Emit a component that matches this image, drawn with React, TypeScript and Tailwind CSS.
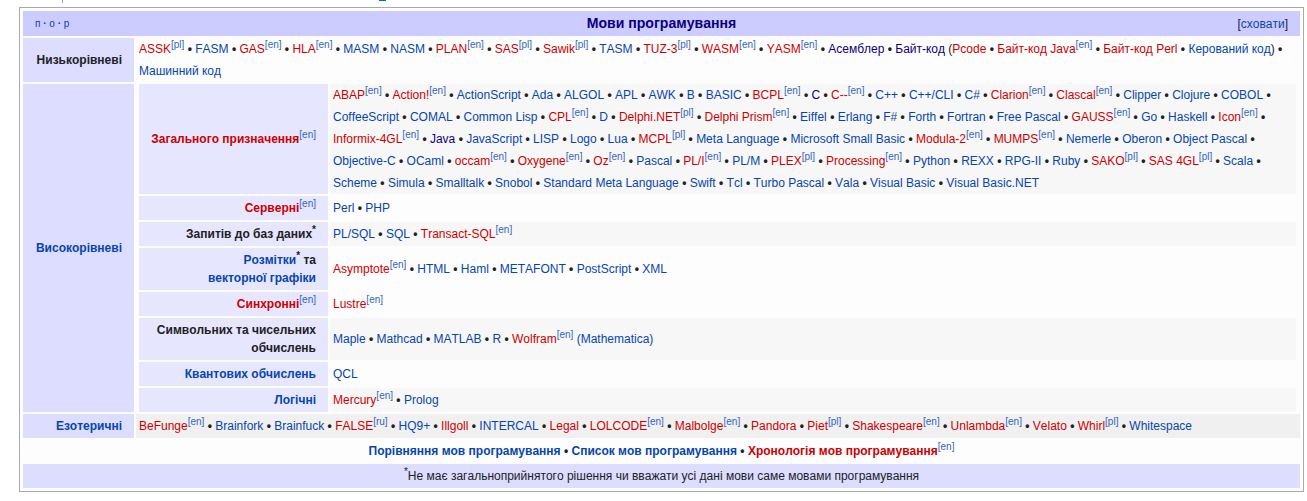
const font = "font-['Liberation_Sans',Arial,sans-serif] [font-kerning:none]";

function Sup({ t }: { t: string }) {
  return <sup className="text-[10px] font-normal leading-none align-super top-0 text-[#3366bb]">[{t}]</sup>;
}

function Star() {
  return <sup className="text-[10px] leading-none align-super top-0">*</sup>;
}

// ~ = red link, @ = visited link, ^ = interwiki note
function Item({ s }: { s: string }) {
  let text = s;
  let open = "";
  let close = "";
  if (text.startsWith("(")) {
    open = "(";
    text = text.slice(1);
  }
  if (text.endsWith(")")) {
    close = ")";
    text = text.slice(0, -1);
  }
  const [name, note] = text.split("^");
  let color = "text-[#0645ad]";
  let label = name;
  if (name.startsWith("~")) {
    color = "text-[#cc0000]";
    label = name.slice(1);
  } else if (name.startsWith("@")) {
    color = "text-[#0b0080]";
    label = name.slice(1);
  }
  return (
    <span className="whitespace-nowrap">
      {open}
      <a className={color}>{label}</a>
      {note && <Sup t={note} />}
      {close}
    </span>
  );
}

function List({ items }: { items: string }) {
  const parts = items.split(" | ");
  return (
    <>
      {parts.map((p, i) => {
        const next = parts[i + 1];
        return (
          <span key={i}>
            <Item s={p} />
            {next && !next.startsWith("(") && <b className="font-bold whitespace-nowrap">&nbsp;•</b>}
            {next && " "}
          </span>
        );
      })}
    </>
  );
}

const low =
  "~ASSK^pl | FASM | ~GAS^en | ~HLA^en | MASM | NASM | ~PLAN^en | ~SAS^pl | ~Sawik^pl | TASM | ~TUZ-3^pl | ~WASM^en | ~YASM^en | @Асемблер | @Байт-код | (~Pcode | ~Байт-код Java^en | ~Байт-код Perl | Керований код) | Машинний код";
const general =
  "~ABAP^en | ~Action!^en | ActionScript | Ada | ALGOL | APL | AWK | B | BASIC | ~BCPL^en | @C | ~C--^en | C++ | C++/CLI | C# | ~Clarion^en | ~Clascal^en | Clipper | Clojure | COBOL | CoffeeScript | COMAL | Common Lisp | ~CPL^en | D | ~Delphi.NET^pl | ~Delphi Prism^en | Eiffel | Erlang | F# | Forth | Fortran | Free Pascal | ~GAUSS^en | Go | Haskell | ~Icon^en | ~Informix-4GL^en | @Java | JavaScript | LISP | Logo | Lua | ~MCPL^pl | Meta Language | Microsoft Small Basic | ~Modula-2^en | ~MUMPS^en | Nemerle | Oberon | Object Pascal | Objective-C | OCaml | ~occam^en | ~Oxygene^en | ~Oz^en | Pascal | ~PL/I^en | PL/M | ~PLEX^pl | ~Processing^en | Python | REXX | RPG-II | Ruby | ~SAKO^pl | ~SAS 4GL^pl | Scala | Scheme | Simula | Smalltalk | Snobol | Standard Meta Language | Swift | Tcl | Turbo Pascal | Vala | Visual Basic | Visual Basic.NET";
const esoteric =
  "~BeFunge^en | Brainfork | Brainfuck | ~FALSE^ru | HQ9+ | ~Illgoll | INTERCAL | ~Legal | ~LOLCODE^en | ~Malbolge^en | ~Pandora | ~Piet^pl | ~Shakespeare^en | ~Unlambda^en | ~Velato | ~Whirl^pl | Whitespace";

function SubRow({
  title,
  items,
  even,
  height,
  children,
}: {
  title: React.ReactNode;
  items?: string;
  even?: boolean;
  height: string;
  children?: React.ReactNode;
}) {
  return (
    <div className={`flex gap-[2px] ${height}`}>
      <div className="w-[189px] shrink-0 bg-[#e6e6ff] pl-2 pr-3 font-bold text-right leading-[18px] flex flex-col justify-center">
        {title}
      </div>
      <div className={`flex-1 px-[3px] flex items-center ${even ? "bg-[#f7f7f7]" : ""}`}>
        <div>{items ? <List items={items} /> : children}</div>
      </div>
    </div>
  );
}

export default function App() {
  return (
    <div className={`${font} relative h-[501px] bg-white pt-[7px] pl-[19px] pr-[3px] text-[12px] leading-[22px] text-[#202122]`}>
      {/* bits of the line above, cut off by the top of the page */}
      <span className="absolute left-[62px] top-0 w-px h-[3px] bg-[#a98ee6]" />
      <span className="absolute left-[379px] top-0 w-[7px] h-px bg-[#0b63ce]" />

      <div className="border border-[#aaaaaa] bg-[#fdfdfd] p-[3px] flex flex-col gap-[2px]">
        <div className="h-[25px] bg-[#ccccff] flex items-center px-3">
          <div className="w-[60px] text-[10px] text-[#0645ad] whitespace-nowrap">
            п <b>·</b> о <b>·</b> р
          </div>
          <div className="flex-1 text-center text-[14.1px] font-bold text-[#0b0080] -translate-y-px">Мови програмування</div>
          <div className="w-[60px] text-right text-[#0645ad] whitespace-nowrap">
            <span className="text-[#202122]">[</span>сховати<span className="text-[#202122]">]</span>
          </div>
        </div>

        <div className="flex gap-[2px] h-[44px]">
          <div className="w-[111px] shrink-0 bg-[#ddddff] px-3 font-bold text-right flex items-center justify-end">Низькорівневі</div>
          <div className="flex-1 px-[3px]">
            <List items={low} />
          </div>
        </div>

        <div className="flex gap-[2px]">
          <div className="w-[111px] shrink-0 bg-[#ddddff] px-3 font-bold flex items-center justify-end text-[#0645ad]">
            Високорівневі
          </div>
          <div className="flex-1 flex flex-col gap-[2px] pl-[3px] pr-[4px]">
            <SubRow
              even
              height="h-[110px]"
              items={general}
              title={
                <span className="whitespace-nowrap">
                  <a className="text-[#cc0000]">Загального призначення</a>
                  <Sup t="en" />
                </span>
              }
            />
            <SubRow
              height="h-[24px]"
              items="Perl | PHP"
              title={
                <span>
                  <a className="text-[#cc0000]">Серверні</a>
                  <Sup t="en" />
                </span>
              }
            />
            <SubRow
              even
              height="h-[24px]"
              items="PL/SQL | SQL | ~Transact-SQL^en"
              title={
                <span>
                  Запитів до баз даних
                  <Star />
                </span>
              }
            />
            <SubRow
              height="h-[42px]"
              items="~Asymptote^en | HTML | Haml | METAFONT | PostScript | XML"
              title={
                <span>
                  <a className="text-[#0645ad]">Розмітки</a>
                  <Star /> та
                  <br />
                  <a className="text-[#0645ad]">векторної графіки</a>
                </span>
              }
            />
            <SubRow
              height="h-[24px]"
              items="~Lustre^en"
              title={
                <span>
                  <a className="text-[#cc0000]">Синхронні</a>
                  <Sup t="en" />
                </span>
              }
            />
            <SubRow even height="h-[42px]" title={<span>Символьних та чисельних обчислень</span>}>
              <List items="Maple | Mathcad | MATLAB | R | ~Wolfram^en" /> <a className="text-[#0645ad]">(Mathematica)</a>
            </SubRow>
            <SubRow height="h-[24px]" items="QCL" title={<a className="text-[#0645ad]">Квантових обчислень</a>} />
            <SubRow
              even
              height="h-[24px]"
              items="~Mercury^en | Prolog"
              title={<a className="text-[#0645ad]">Логічні</a>}
            />
          </div>
        </div>

        <div className="flex gap-[2px] h-[24px]">
          <div className="w-[111px] shrink-0 bg-[#ddddff] px-3 font-bold flex items-center justify-end text-[#0645ad]">Езотеричні</div>
          <div className="flex-1 bg-[#f0f0f0] px-[3px] flex items-center">
            <div>
              <List items={esoteric} />
            </div>
          </div>
        </div>

        <div className="h-[22px] text-center font-bold">
          <a className="text-[#0645ad]">Порівняння мов програмування</a> • <a className="text-[#0645ad]">Список мов програмування</a> •{" "}
          <a className="text-[#cc0000]">Хронологія мов програмування</a>
          <Sup t="en" />
        </div>

        <div className="h-[24px] flex items-center justify-center bg-[#ddddff]">
          <div>
            <Star />Не має загальноприйнятого рішення чи вважати усі дані мови саме мовами програмування
          </div>
        </div>
      </div>
    </div>
  );
}
